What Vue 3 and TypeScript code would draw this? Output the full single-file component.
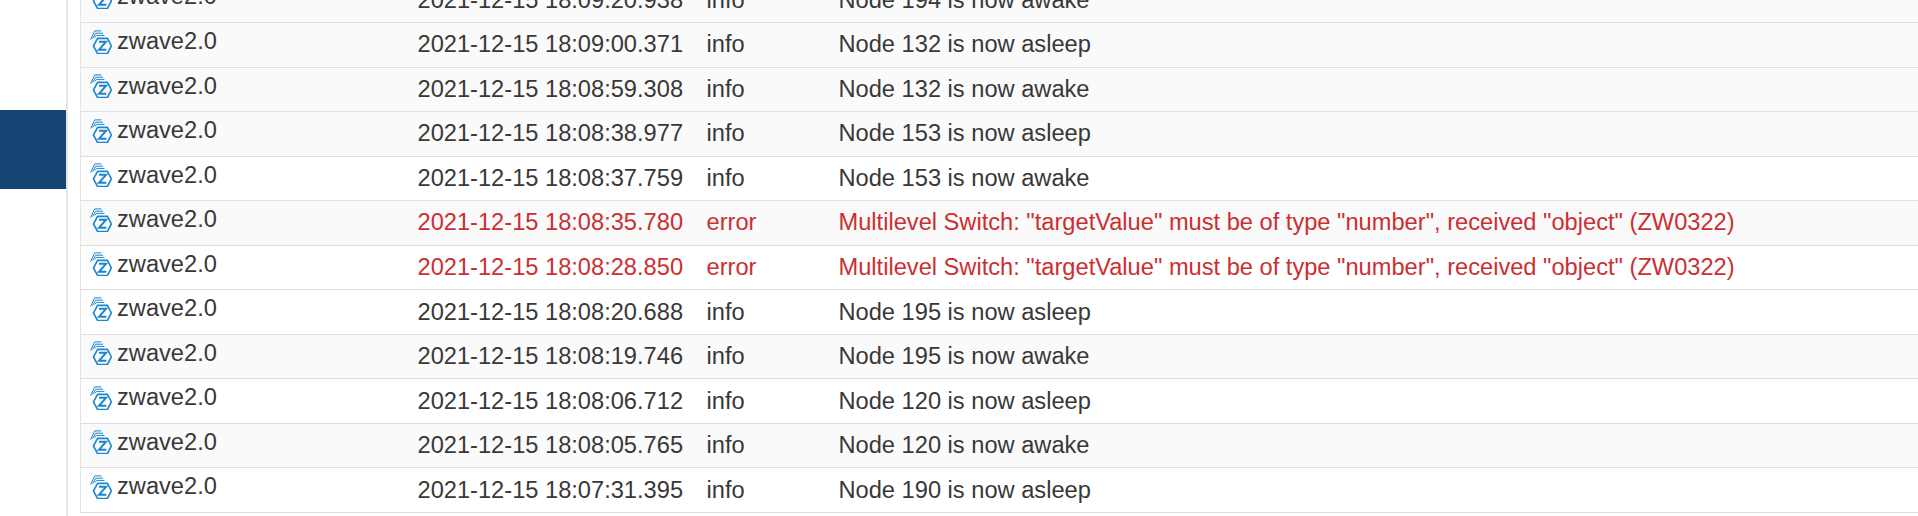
<script setup lang="ts">
interface LogRow {
  time: string
  level: string
  message: string
  shaded: boolean
}

const zw = 'Multilevel Switch: "targetValue" must be of type "number", received "object" (ZW0322)'

const rows: LogRow[] = [
  { time: '2021-12-15 18:09:20.938', level: 'info', message: 'Node 194 is now awake', shaded: true },
  { time: '2021-12-15 18:09:00.371', level: 'info', message: 'Node 132 is now asleep', shaded: true },
  { time: '2021-12-15 18:08:59.308', level: 'info', message: 'Node 132 is now awake', shaded: true },
  { time: '2021-12-15 18:08:38.977', level: 'info', message: 'Node 153 is now asleep', shaded: true },
  { time: '2021-12-15 18:08:37.759', level: 'info', message: 'Node 153 is now awake', shaded: false },
  { time: '2021-12-15 18:08:35.780', level: 'error', message: zw, shaded: true },
  { time: '2021-12-15 18:08:28.850', level: 'error', message: zw, shaded: false },
  { time: '2021-12-15 18:08:20.688', level: 'info', message: 'Node 195 is now asleep', shaded: false },
  { time: '2021-12-15 18:08:19.746', level: 'info', message: 'Node 195 is now awake', shaded: true },
  { time: '2021-12-15 18:08:06.712', level: 'info', message: 'Node 120 is now asleep', shaded: false },
  { time: '2021-12-15 18:08:05.765', level: 'info', message: 'Node 120 is now awake', shaded: true },
  { time: '2021-12-15 18:07:31.395', level: 'info', message: 'Node 190 is now asleep', shaded: false }
]
</script>

<template>
  <div class="page">
    <aside class="sidebar">
      <div class="active-item"></div>
    </aside>
    <main class="content">
      <div class="log">
        <div
          v-for="row in rows"
          :key="row.time"
          class="row"
          :class="{ shaded: row.shaded, error: row.level === 'error' }"
        >
          <div class="cell source">
            <svg class="zicon" viewBox="0 0 22 24" width="22" height="24" fill="none" stroke="#1a86cf">
              <path d="M7.6 8.4H17.4L21.4 16L17.4 23.5H7.6L3.4 16Z" stroke-width="1.6" stroke-linejoin="miter" />
              <path d="M9 11.8H16L9 19.8H16.4" stroke-width="2" stroke-linejoin="miter" />
              <path d="M.6 9.6L4.7 .9H11.4" stroke-width="1" />
              <path d="M2.5 8.6L5.8 3.2H13" stroke-width="1" />
              <path d="M4.6 7.2L6.8 5.4H14.4" stroke-width="1" />
            </svg>
            <span class="source-name">zwave2.0</span>
          </div>
          <div class="cell">{{ row.time }}</div>
          <div class="cell">{{ row.level }}</div>
          <div class="cell">{{ row.message }}</div>
        </div>
      </div>
    </main>
  </div>
</template>

<style>
html,
body {
  margin: 0;
  height: 100%;
  overflow: hidden;
  background: #fff;
}
</style>

<style scoped>
.page {
  display: flex;
  height: 516px;
  overflow: hidden;
  font-family: "Liberation Sans", Arial, sans-serif;
  font-size: 23.65px;
  color: #383838;
  background: #fff;
}

.sidebar {
  flex: 0 0 66px;
  padding-top: 110px;
  border-right: 2px solid #e6e6e6;
  box-sizing: content-box;
}

.active-item {
  height: 79px;
  background: #164473;
}

.content {
  flex: 1;
  min-width: 0;
  padding-left: 12px;
}

.log {
  margin-top: -21.55px;
  border-left: 1px solid #e4e4e4;
}

.row {
  display: grid;
  grid-template-columns: 328px 289px 132px 1fr;
  height: 44.55px;
  box-sizing: border-box;
  border-bottom: 1px solid #dedede;
  background: #fff;
}

.row.shaded {
  background: #fafafa;
}

.row.error {
  color: #cb2f32;
}

.cell {
  display: flex;
  align-items: center;
  padding-left: 8.5px;
  white-space: nowrap;
}

.source {
  color: #383838;
  gap: 5px;
  padding-left: 9px;
  padding-bottom: 6.5px;
}

.zicon {
  flex: none;
}
</style>
